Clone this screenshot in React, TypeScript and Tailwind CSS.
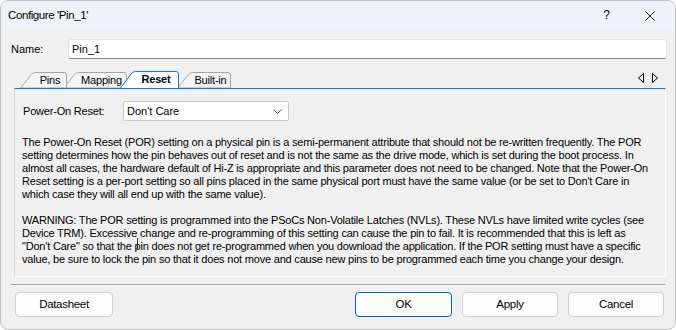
import React from "react";

const P1 = [
  "The Power-On Reset (POR) setting on a physical pin is a semi-permanent attribute that should not be re-written frequently. The POR",
  "setting determines how the pin behaves out of reset and is not the same as the drive mode, which is set during the boot process. In",
  "almost all cases, the hardware default of Hi-Z is appropriate and this parameter does not need to be changed. Note that the Power-On",
  "Reset setting is a per-port setting so all pins placed in the same physical port must have the same value (or be set to Don't Care in",
  "which case they will all end up with the same value).",
];
const P2 = [
  "WARNING: The POR setting is programmed into the PSoCs Non-Volatile Latches (NVLs). These NVLs have limited write cycles (see",
  "Device TRM). Excessive change and re-programming of this setting can cause the pin to fail. It is recommended that this is left as",
  "\"Don't Care\" so that the pin does not get re-programmed when you download the application. If the POR setting must have a specific",
  "value, be sure to lock the pin so that it does not move and cause new pins to be programmed each time you change your design.",
];

function Tab({
  label,
  w,
  selected,
  cls,
}: {
  label: string;
  w: number;
  selected?: boolean;
  cls: string;
}) {
  const h = selected ? 17 : 16;
  const d = `M0.5,${h} L11.5,2.5 Q13.5,0.5 15.5,0.5 L${w - 3},0.5 Q${w - 0.5},0.5 ${w - 0.5},3 L${w - 0.5},${h}`;
  return (
    <div
      className={`relative flex items-center shrink-0 ${selected ? "h-[17px]" : "h-[16px]"} ${cls}`}
      style={{ width: w }}
    >
      <svg className="absolute inset-0" width={w} height={h}>
        <path
          d={d + (selected ? "" : " Z")}
          fill={selected ? "#ffffff" : "#f4f4f4"}
          stroke={selected ? "#0a78d7" : "#a5a5a5"}
          strokeWidth={1}
        />
      </svg>
      <span
        className={`relative flex-1 pl-[13px] text-center tracking-[-0.2px] ${selected ? "font-bold" : ""}`}
      >
        {label}
      </span>
    </div>
  );
}

export default function App() {
  return (
    <div
      className="w-[676px] h-[330px] bg-white text-black text-[11px] leading-[13px]"
      style={{ fontFamily: '"Liberation Sans", Arial, sans-serif' }}
    >
      <div className="w-full h-full rounded-[8px] border border-[#c2c2c2] bg-[#f0f0f0] overflow-hidden flex flex-col">
        {/* Title bar */}
        <div className="h-[29px] shrink-0 bg-[#eef3f8] flex items-center pl-[7px] text-[11.5px]">
          <span className="tracking-[-0.4px]">Configure 'Pin_1'</span>
          <span className="ml-auto text-[12px]">?</span>
          <svg className="ml-[35px] mr-[20px]" width="10" height="10" viewBox="0 0 10 10">
            <path d="M0.5,0.5 L9.5,9.5 M9.5,0.5 L0.5,9.5" stroke="#222" strokeWidth="1" />
          </svg>
        </div>

        {/* Name row */}
        <div className="flex items-center mt-[9px] pl-[10px] pr-[8px] h-[20px]">
          <span className="w-[57px]">Name:</span>
          <div className="flex-1 h-[20px] bg-white rounded-[3px] border border-[#e3e3e3] border-b-[#8a8a8a] flex items-center pl-[3px]">
            Pin_1
          </div>
        </div>

        {/* Tab control */}
        <div className="ml-[13px] w-[652px] mt-[12px] flex flex-col">
          <div className="h-[17px] flex items-end relative">
            <div className="flex items-end pl-[6px]">
              <Tab label="Pins" w={47} cls="z-[3]" />
              <Tab label="Mapping" w={64} cls="ml-[-4px] z-[2]" />
              <Tab label="Reset" w={59} selected cls="ml-[-7px] z-[10]" />
              <Tab label="Built-in" w={54} cls="ml-[-2px] z-[1]" />
            </div>
            <div className="ml-auto mr-[8px] mb-[5px] flex items-center gap-[8px]">
              <svg width="6" height="10" viewBox="0 0 6 10">
                <path d="M5.5,0.5 L5.5,9.5 L0.5,5 Z" fill="none" stroke="#000" strokeWidth="1" />
              </svg>
              <svg width="6" height="10" viewBox="0 0 6 10">
                <path d="M0.5,0.5 L0.5,9.5 L5.5,5 Z" fill="none" stroke="#000" strokeWidth="1" />
              </svg>
            </div>
          </div>
          <div className="h-[189px] border-t border-t-[#0a78d7] border-l border-l-[#d9d9d9] border-r border-r-white border-b border-b-white pt-[12px] pl-[8px] relative">
            <div className="flex items-center h-[20px]">
              <span className="w-[100px] tracking-[-0.2px]">Power-On Reset:</span>
              <div className="w-[166px] h-[20px] bg-white border border-[#c8c8c8] rounded-[2px] flex items-center pl-[3px] pr-[6px]">
                <span className="flex-1">Don't Care</span>
                <svg width="9" height="5" viewBox="0 0 9 5">
                  <path d="M0.5,0.5 L4.5,4.5 L8.5,0.5" fill="none" stroke="#555" strokeWidth="1" />
                </svg>
              </div>
            </div>
            <div className="mt-[15px] ml-[-1px] whitespace-nowrap tracking-[-0.2px]">
              {P1.map((l, i) => (
                <div key={i}>{l}</div>
              ))}
              <div className="h-[13px]" />
              {P2.map((l, i) => (
                <div key={i}>{l}</div>
              ))}
            </div>
            <div className="absolute left-[122px] top-[149px] w-px h-[11px] bg-[#333]" />
          </div>
        </div>

        {/* Separator */}
        <div className="mt-[7px] mx-[10px] h-px bg-[#a0a0a0]" />
        <div className="mx-[10px] h-px bg-white" />

        {/* Buttons */}
        <div className="mt-[6px] flex pl-[14px] pr-[11px] text-[11.5px]">
          <button className="w-[98px] h-[25px] bg-[#fdfdfd] border border-[#d0d0d0] rounded-[4px] tracking-[-0.3px]">
            Datasheet
          </button>
          <button className="ml-auto w-[97px] h-[25px] bg-[#fdfdfd] border border-[#0067c0] rounded-[4px] tracking-[-0.3px]">
            OK
          </button>
          <button className="ml-[10px] w-[96px] h-[25px] bg-[#fdfdfd] border border-[#d0d0d0] rounded-[4px] tracking-[-0.3px]">
            Apply
          </button>
          <button className="ml-[10px] w-[96px] h-[25px] bg-[#fdfdfd] border border-[#d0d0d0] rounded-[4px] tracking-[-0.3px]">
            Cancel
          </button>
        </div>
      </div>
    </div>
  );
}
